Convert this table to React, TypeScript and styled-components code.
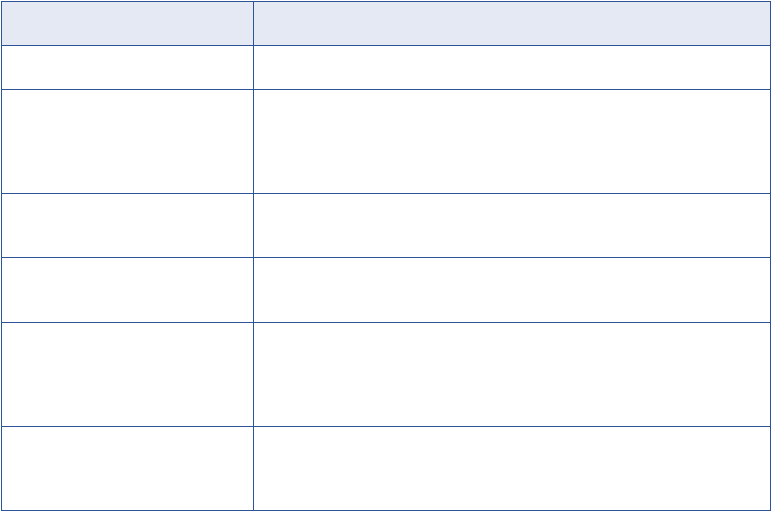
import React from "react";
import styled, { createGlobalStyle } from "styled-components";

const Global = createGlobalStyle`
  html, body {
    margin: 0;
    padding: 0;
    background: #ffffff;
    font-family: "Liberation Sans", Arial, sans-serif;
  }
`;

const Page = styled.div`
  padding: 1px 0 0 1px;
`;

const Grid = styled.div<{ $rows: number[] }>`
  display: grid;
  width: 770px;
  box-sizing: border-box;
  grid-template-columns: 252px 517px;
  grid-template-rows: ${(p) => p.$rows.map((r) => `${r}px`).join(" ")};
  border-top: 1px solid #2c5298;
  border-left: 1px solid #2c5298;
`;

const Cell = styled.div<{ $head?: boolean }>`
  box-sizing: border-box;
  border-right: 1px solid #2c5298;
  border-bottom: 1px solid #2c5298;
  background: ${(p) => (p.$head ? "#e4e9f4" : "#ffffff")};
  font-size: 13px;
  color: #222;
  padding: 8px 10px;
`;

const rows = [44, 44, 104, 64, 65, 104, 84];

export default function App() {
  return (
    <>
      <Global />
      <Page>
        <Grid $rows={rows} role="table">
          {rows.map((_, i) => (
            <React.Fragment key={i}>
              <Cell $head={i === 0} role={i === 0 ? "columnheader" : "cell"} />
              <Cell $head={i === 0} role={i === 0 ? "columnheader" : "cell"} />
            </React.Fragment>
          ))}
        </Grid>
      </Page>
    </>
  );
}
